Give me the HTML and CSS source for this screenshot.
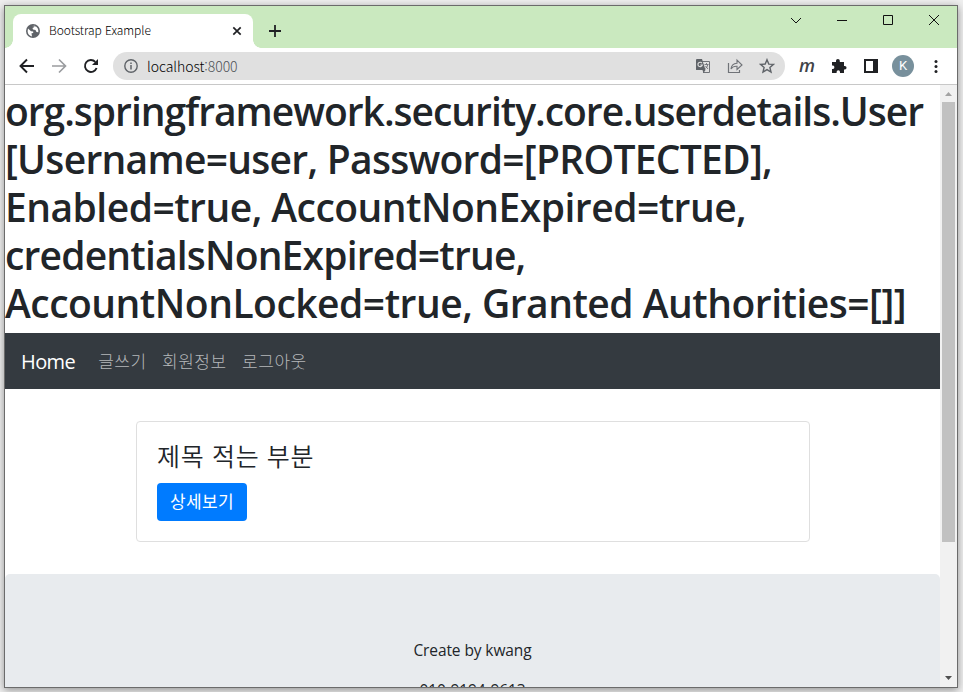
FILE: index.html
```html
<!DOCTYPE html>
<html lang="ko">
<head>
<meta charset="utf-8">
<title>Bootstrap Example</title>
<link rel="stylesheet" href="styles.css">
</head>
<body>
<div class="window">
  <header class="tabstrip">
    <div class="tab">
      <svg class="globe" width="14" height="14" viewBox="0 0 14 14"><circle cx="7" cy="7" r="7" fill="#5f6368"/><path d="M2 4.5L5 7.2L7.2 7.5V9L5.5 9.2L6 12.5C3.500 12 1.700 10 1.600 7.300ZM6 2L9 1.700L8 3.200L6.500 4L7 5.500L9.500 6L10.500 8L12.300 8.300C12.600 6 12 4 10 2.500Z" fill="#fff"/></svg>
      <span class="tab-title">Bootstrap Example</span>
      <svg class="tab-close" width="10" height="10" viewBox="0 0 10 10"><path d="M1.300 1.300L8.700 8.700M8.700 1.300L1.300 8.700" stroke="#202124" stroke-width="1.7"/></svg>
    </div>
    <svg class="new-tab" width="12" height="12" viewBox="0 0 12 12"><path d="M6 0V12M0 6H12" stroke="#202124" stroke-width="1.8"/></svg>
    <div class="controls">
      <svg width="46" height="28" viewBox="0 0 46 28"><path d="M18 12L23 17L28 12" fill="none" stroke="#111"/></svg>
      <svg width="46" height="28" viewBox="0 0 46 28"><path d="M18 14.500H28" stroke="#111"/></svg>
      <svg width="46" height="28" viewBox="0 0 46 28"><path d="M18.500 9.500H27.500V18.500H18.500Z" fill="none" stroke="#111"/></svg>
      <svg width="46" height="28" viewBox="0 0 46 28"><path d="M18 9L28 19M28 9L18 19" stroke="#111"/></svg>
    </div>
  </header>
  <div class="toolbar">
    <svg class="nav-icon" width="16" height="16" viewBox="0 0 16 16"><path d="M15 8H2M8 1.500L1.500 8L8 14.500" fill="none" stroke="#202124" stroke-width="1.900"/></svg>
    <svg class="nav-icon" width="16" height="16" viewBox="0 0 16 16"><path d="M1 8H14M8 1.500L14.500 8L8 14.500" fill="none" stroke="#9a9c9f" stroke-width="1.700"/></svg>
    <svg class="nav-icon" width="16" height="16" viewBox="0 0 16 16"><path d="M13.600 10A6 6 0 1 1 12.300 3.800" fill="none" stroke="#202124" stroke-width="1.900"/><path d="M15 1V7H9Z" fill="#202124"/></svg>
    <div class="omnibox">
      <svg width="14" height="14" viewBox="0 0 14 14"><circle cx="7" cy="7" r="6.200" fill="none" stroke="#5f6368" stroke-width="1.400"/><path d="M7 6V10.500M7 3.500V5" stroke="#5f6368" stroke-width="1.500"/></svg>
      <span class="url">localhost<span class="port">:8000</span></span>
      <div class="page-actions">
        <svg width="16" height="16" viewBox="0 0 16 16"><path d="M6 3.500H14.500V14.500H8" fill="none" stroke="#707378"/><path d="M1.500 1H7L10.500 12H1.500Q1 12 1 11.500V1.500Z" fill="#5f6368"/><path d="M7.500 12L8.500 15L10.500 12Z" fill="#5f6368"/><path d="M7 5.200A2.200 2.200 0 1 0 7.300 7H5.300" fill="none" stroke="#e0e0e0" stroke-width="1.100"/><path d="M9.500 6.500H13.500M11.500 5V6.500M12.800 6.500Q12.500 9 10.500 10.500M10.500 8L13 11" fill="none" stroke="#707378" stroke-width=".9"/></svg>
        <svg width="16" height="16" viewBox="0 0 16 16"><path d="M1.500 5V14.500H12.500V12" fill="none" stroke="#707378" stroke-width="1.200"/><path d="M4 11Q4.500 5.500 10 5.200V2L15 7L10 11.500V8.300Q6 8 4 11Z" fill="none" stroke="#707378" stroke-width="1.100"/></svg>
        <svg width="16" height="16" viewBox="0 0 16 16"><path d="M8 1.700L9.800 6.100L14.500 6.400L10.900 9.500L12 14.100L8 11.600L4 14.100L5.100 9.500L1.500 6.400L6.200 6.100Z" fill="none" stroke="#5f6368" stroke-width="1.400"/></svg>
      </div>
    </div>
    <div class="extensions">
      <span class="ext-m">m</span>
      <svg width="16" height="16" viewBox="0 0 16 16"><path d="M1 4H5V2.800A1.900 1.900 0 0 1 8.800 2.800V4H13V8H13.800A1.700 1.700 0 0 1 13.800 11.500H13V15H9V14A1.700 1.700 0 0 0 5.600 14V15H1V11H2A1.800 1.800 0 0 0 2 7.500H1Z" fill="#202124"/></svg>
      <svg width="16" height="16" viewBox="0 0 16 16"><path d="M1 1H15V15H1ZM3 3V13H10V3Z" fill="#202124" fill-rule="evenodd"/></svg>
      <span class="avatar">K</span>
      <svg width="16" height="16" viewBox="0 0 16 16" fill="#202124"><circle cx="8" cy="3.500" r="1.500"/><circle cx="8" cy="8.500" r="1.500"/><circle cx="8" cy="13.500" r="1.500"/></svg>
    </div>
  </div>
  <div class="viewport">
    <main class="page">
      <h1 class="principal">
        <span class="l1">org.springframework.security.core.userdetails.User</span>
        <span class="l2">[Username=user, Password=[PROTECTED],</span>
        <span class="l3">Enabled=true, AccountNonExpired=true,</span>
        <span class="l4">credentialsNonExpired=true,</span>
        <span class="l5">AccountNonLocked=true, Granted Authorities=[]]</span>
      </h1>
      <nav class="navbar">
        <a class="brand">Home</a>
        <a class="nav-link">글쓰기</a>
        <a class="nav-link">회원정보</a>
        <a class="nav-link">로그아웃</a>
      </nav>
      <section class="card">
        <h4 class="card-title">제목 적는 부분</h4>
        <a class="btn">상세보기</a>
      </section>
      <footer class="jumbotron">
        <p class="credit">Create by kwang</p>
        <p class="phone">010-9194-9613</p>
      </footer>
    </main>
    <div class="scrollbar">
      <svg width="17" height="17" viewBox="0 0 17 17"><path d="M5 11L8.500 7L12 11Z" fill="#a3a3a3"/></svg>
      <div class="thumb"></div>
      <svg class="down" width="17" height="17" viewBox="0 0 17 17"><path d="M5 6L8.500 10L12 6Z" fill="#505050"/></svg>
    </div>
  </div>
</div>
</body>
</html>
```
FILE: styles.css
```css
* { box-sizing: border-box; }
body {
  margin: 0;
  height: 692px;
  padding: 5px 5px 4px 4px;
  overflow: hidden;
  background: #efefef;
  font-family: "Open Sans", "Noto Sans CJK KR", sans-serif;
  color: #212529;
}
svg { display: block; flex: none; }
.window {
  width: 954px;
  height: 683px;
  border: 1px solid #6b6b6b;
  background: #fff;
  display: flex;
  flex-direction: column;
  overflow: hidden;
  box-shadow: 0 2px 8px rgba(0, 0, 0, .4);
}
.tabstrip { height: 42px; flex: none; display: flex; background: #cae9bf; }
.tab {
  position: relative;
  width: 240px;
  height: 34px;
  margin: 8px 0 0 8px;
  padding: 0 11px 0 13px;
  border-radius: 8px 8px 0 0;
  background: #fff;
  display: flex;
  align-items: center;
}
.tab::before, .tab::after {
  content: "";
  position: absolute;
  bottom: 0;
  width: 8px;
  height: 8px;
}
.tab::before { left: -8px; background: radial-gradient(circle at 0 0, #cae9bf 7.5px, #fff 8px); }
.tab::after { right: -8px; background: radial-gradient(circle at 100% 0, #cae9bf 7.5px, #fff 8px); }
.tab-title {
  margin-left: 9px;
  padding-bottom: 3px;
  flex: 1;
  font: 300 12px "Noto Sans CJK KR", sans-serif;
  letter-spacing: -.05px;
  color: #000;
}
.new-tab { margin: 19px 0 0 16px; }
.controls { margin-left: auto; display: flex; }
.toolbar {
  height: 37px;
  flex: none;
  padding: 0 13px 0 14px;
  border-bottom: 1px solid #c8c8c8;
  display: flex;
  align-items: center;
}
.nav-icon { margin-right: 16px; }
.omnibox {
  width: 672px;
  height: 28px;
  margin-left: -2px;
  padding: 0 10px 0 11px;
  border-radius: 14px;
  background: #e0e0e0;
  display: flex;
  align-items: center;
}
.url { margin-left: 9px; padding-bottom: 1px; flex: 1; font: 300 14px "Noto Sans CJK KR", sans-serif; letter-spacing: -.05px; color: #000; }
.port { color: #4f5358; }
.page-actions { display: flex; gap: 16px; }
.extensions { flex: 1; margin-left: 14px; display: flex; align-items: center; }
.ext-m { width: 16px; margin-right: 16px; padding-bottom: 3px; font: italic 600 18px/20px "Open Sans", sans-serif; color: #414347; }
.extensions svg { margin-right: 16px; }
.avatar {
  width: 22px;
  height: 22px;
  margin: 0 21px 0 -3px;
  border-radius: 50%;
  background: #78909c;
  color: #fff;
  font: 13px/22px Roboto, sans-serif;
  text-align: center;
  flex: none;
}
.extensions svg:last-child { margin: 0 -4px 0 -7px; }
.viewport { flex: 1; min-height: 0; display: flex; }
.page { width: 935px; overflow: hidden; }
.principal { margin: 2px 0 6px; font-size: 39px; font-weight: 560; line-height: 48px; white-space: nowrap; }
.principal span { display: block; width: max-content; }
.l1 { letter-spacing: -1.02px; }
.l2 { letter-spacing: -.72px; }
.l3 { letter-spacing: -.52px; }
.l4 { letter-spacing: -.82px; }
.l5 { letter-spacing: -.5px; }
.navbar { height: 56px; padding: 0 16px; background: #343a40; display: flex; align-items: center; }
.brand { margin-right: 15px; color: #fff; font-size: 20px; letter-spacing: -.6px; }
.nav-link { padding: 0 7.5px 2px 8px; color: #b4b7ba; font-size: 17px; font-weight: 300; letter-spacing: .5px; }
.card { width: 674px; height: 121px; margin: 32px 0 32px 131px; padding: 20px; border: 1px solid #dfdfdf; border-radius: 4px; }
.card-title { margin: 0 0 12px; font-size: 25px; font-weight: 350; line-height: 29px; letter-spacing: .8px; }
.btn { display: inline-block; width: 90px; height: 38px; border-radius: 4px; background: #007bff; color: #fff; font-size: 17px; line-height: 37px; text-align: center; letter-spacing: .3px; }
.jumbotron { height: 250px; padding-top: 64px; border-radius: 5px; background: #e8ebee; text-align: center; font-size: 15.5px; line-height: 24px; }
.jumbotron p { margin: 0 0 16px; letter-spacing: -.1px; }
.scrollbar { width: 17px; background: #f1f1f1; display: flex; flex-direction: column; }
.thumb { width: 13px; height: 440px; margin-left: 2px; background: #c1c1c1; }
.down { margin-top: auto; }
```
